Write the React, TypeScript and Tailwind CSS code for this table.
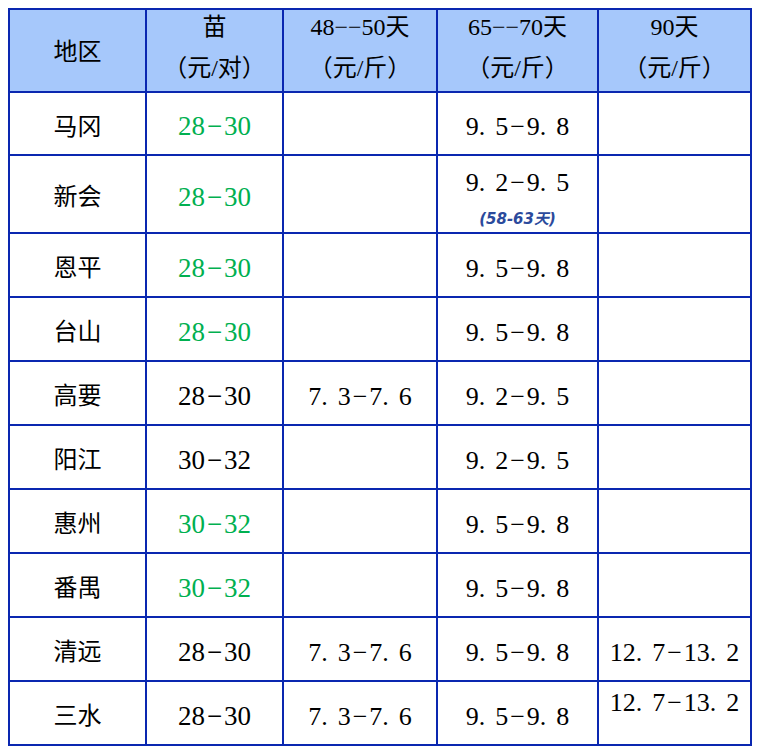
import React from "react";

type Row = {
  region: string;
  seed: string;
  green: boolean;
  c48?: string;
  c65: string;
  note?: string;
  c90?: string;
  c90Top?: boolean;
};

const rows: Row[] = [
  { region: "马冈", seed: "28-30", green: true, c65: "9.5-9.8" },
  { region: "新会", seed: "28-30", green: true, c65: "9.2-9.5", note: "(58-63天)" },
  { region: "恩平", seed: "28-30", green: true, c65: "9.5-9.8" },
  { region: "台山", seed: "28-30", green: true, c65: "9.5-9.8" },
  { region: "高要", seed: "28-30", green: false, c48: "7.3-7.6", c65: "9.2-9.5" },
  { region: "阳江", seed: "30-32", green: false, c65: "9.2-9.5" },
  { region: "惠州", seed: "30-32", green: true, c65: "9.5-9.8" },
  { region: "番禺", seed: "30-32", green: true, c65: "9.5-9.8" },
  { region: "清远", seed: "28-30", green: false, c48: "7.3-7.6", c65: "9.5-9.8", c90: "12.7-13.2" },
  { region: "三水", seed: "28-30", green: false, c48: "7.3-7.6", c65: "9.5-9.8", c90: "12.7-13.2", c90Top: true },
];

// price text: wide period and minus, like the original sheet
function Num({ v }: { v: string }) {
  return (
    <span className="whitespace-nowrap">
      {v.split("").map((ch, i) => {
        if (ch === ".") return <span key={i} className="mr-[10px]">.</span>;
        if (ch === "-") return <span key={i} className="mx-[2px]">−</span>;
        return <span key={i}>{ch}</span>;
      })}
    </span>
  );
}

function Head({ top, bottom }: { top: string; bottom: string }) {
  return (
    <div className="bg-[#a6c8fb] flex flex-col items-center justify-center pb-[6px] text-[24px] leading-[41px] text-black">
      <div>{top}</div>
      <div>{bottom}</div>
    </div>
  );
}

export default function App() {
  const font = { fontFamily: "'Liberation Serif', 'Noto Sans CJK SC', serif" };

  return (
    <div className="bg-white w-[761px] h-[755px] pt-[8px] pl-[8px]" style={font}>
      <div className="w-[744px] bg-[#0a27b0] p-[2px] grid grid-cols-[135px_135px_152px_159px_151px] grid-rows-[81px_61px_76px_repeat(8,62px)] gap-[2px]">
        {/* Header */}
        <div className="bg-[#a6c8fb] flex items-center justify-center pt-[2px] text-[24px] text-black">地区</div>
        <Head top="苗" bottom="（元/对）" />
        <Head top="48−−50天" bottom="（元/斤）" />
        <Head top="65−−70天" bottom="（元/斤）" />
        <Head top="90天" bottom="（元/斤）" />

        {rows.map((r) => (
          <React.Fragment key={r.region}>
            <div className="bg-white flex items-center justify-center pt-[6px] text-[24px] text-black">
              {r.region}
            </div>
            <div
              className={`bg-white flex items-center justify-center pt-[6px] text-[27px] ${
                r.green ? "text-[#00b050]" : "text-black"
              }`}
            >
              <Num v={r.seed} />
            </div>
            <div className="bg-white flex items-center justify-center pt-[6px] text-[26px] text-black">
              {r.c48 && <Num v={r.c48} />}
            </div>
            {r.note ? (
              <div className="bg-white flex flex-col items-center justify-start pt-[12px] text-[26px] text-black">
                <div className="leading-[30px]">
                  <Num v={r.c65} />
                </div>
                <div
                  className="text-[15px] italic font-bold text-[#2b4a9c] leading-[16px] mt-[13px]"
                  style={{ fontFamily: "'DejaVu Sans', 'Noto Sans CJK SC', sans-serif" }}
                >
                  {r.note}
                </div>
              </div>
            ) : (
              <div className="bg-white flex items-center justify-center pt-[6px] text-[26px] text-black">
                <Num v={r.c65} />
              </div>
            )}
            <div
              className={`bg-white flex justify-center text-[26px] text-black ${
                r.c90Top ? "items-start pt-[6px] leading-[30px]" : "items-center pt-[6px]"
              }`}
            >
              {r.c90 && <Num v={r.c90} />}
            </div>
          </React.Fragment>
        ))}
      </div>
    </div>
  );
}
